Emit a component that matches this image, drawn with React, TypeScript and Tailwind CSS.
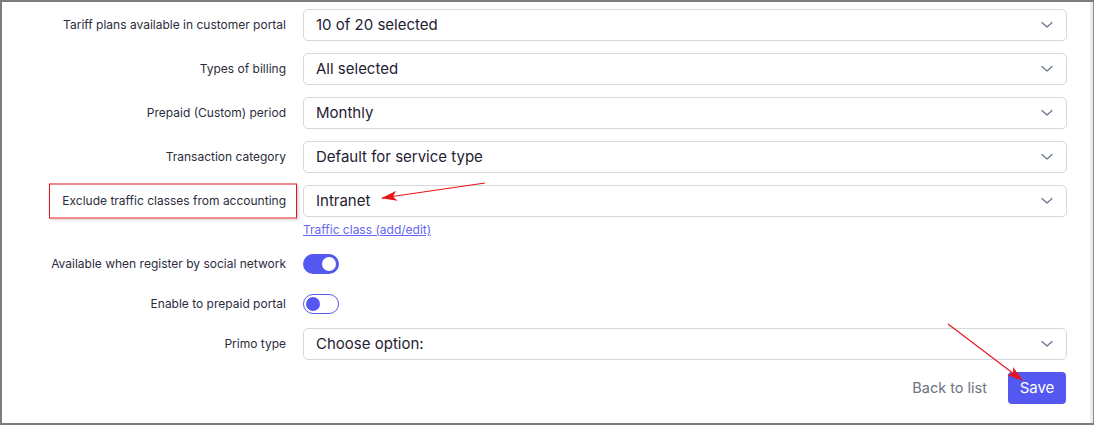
import React from "react";

function Chevron() {
  return (
    <svg width="12" height="8" viewBox="0 0 12 8" fill="none" className="shrink-0">
      <path d="M1 1.5 L6 6 L11 1.5" stroke="#6b7890" strokeWidth="1.3" strokeLinecap="round" strokeLinejoin="round" />
    </svg>
  );
}

function Select({ value }: { value: string }) {
  return (
    <div className="flex h-[32px] flex-1 items-center justify-between rounded-[5px] border border-[#d5d8de] bg-white pl-[12px] pr-[13px]">
      <span className="text-[15px] text-[#1f2233]">{value}</span>
      <Chevron />
    </div>
  );
}

function Label({ children }: { children: React.ReactNode }) {
  return <div className="w-[284px] shrink-0 text-right text-[12px] leading-[16px] text-[#2b2d3c]">{children}</div>;
}

export default function App() {
  return (
    <div
      className="relative h-[425px] w-[1094px] overflow-hidden border-b-2 border-l-2 border-t-2 border-[#7d7d7d] bg-white"
      style={{ fontFamily: "Inter, 'Noto Sans', sans-serif" }}
    >
      <div className="flex h-full">
        <div className="flex flex-1 flex-col pr-[23px] pt-[7px]">
          <div className="flex flex-col gap-[12px]">
            <div className="flex items-center gap-[17px]">
              <Label>Tariff plans available in customer portal</Label>
              <Select value="10 of 20 selected" />
            </div>
            <div className="flex items-center gap-[17px]">
              <Label>Types of billing</Label>
              <Select value="All selected" />
            </div>
            <div className="flex items-center gap-[17px]">
              <Label>Prepaid (Custom) period</Label>
              <Select value="Monthly" />
            </div>
            <div className="flex items-center gap-[17px]">
              <Label>Transaction category</Label>
              <Select value="Default for service type" />
            </div>
            <div className="flex items-center gap-[17px]">
              <div className="relative w-[284px] shrink-0">
                <div className="absolute left-[47px] top-1/2 h-[35px] w-[248px] -translate-y-1/2 border border-[#e0151b] shadow-[1px_1px_3px_rgba(0,0,0,0.25)]" />
                <div className="text-right text-[12px] leading-[16px] text-[#2b2d3c]">Exclude traffic classes from accounting</div>
              </div>
              <Select value="Intranet" />
            </div>
          </div>
          <div className="ml-[301px] mt-[3px] leading-[16px]">
            <span className="text-[12px] leading-[16px] text-[#6366f1] underline">Traffic class (add/edit)</span>
          </div>
          <div className="mt-[16px] flex items-center gap-[17px]">
            <Label>Available when register by social network</Label>
            <div className="flex h-[20px] w-[36px] items-center justify-end rounded-full bg-[#5558f0] pr-[3px]">
              <div className="h-[14px] w-[14px] rounded-full bg-white" />
            </div>
          </div>
          <div className="mt-[20px] flex items-center gap-[17px]">
            <Label>Enable to prepaid portal</Label>
            <div className="flex h-[20px] w-[36px] items-center rounded-full border border-[#5558f0] bg-white pl-[2px]">
              <div className="h-[14px] w-[14px] rounded-full bg-[#5558f0]" />
            </div>
          </div>
          <div className="mt-[14px] flex items-center gap-[17px]">
            <Label>Primo type</Label>
            <Select value="Choose option:" />
          </div>
          <div className="mt-[12px] flex items-center justify-end gap-[21px] pr-[1px]">
            <span className="text-[14.5px] text-[#6b7280]">Back to list</span>
            <div className="flex h-[32px] w-[58px] items-center justify-center rounded-[4px] bg-[#5558f0] text-[15px] text-white">
              Save
            </div>
          </div>
        </div>
        <div className="w-[3px] bg-[#ececec]" />
        <div className="w-[1px] bg-[#8a8a8a]" />
      </div>
      <svg className="pointer-events-none absolute left-0 top-0" width="1094" height="425">
        <defs>
          <marker id="ah" markerWidth="16" markerHeight="10" refX="15" refY="5" orient="auto" markerUnits="userSpaceOnUse">
            <path d="M0 0 L16 5 L0 10 L4 5 Z" fill="#e8141a" />
          </marker>
        </defs>
        <line x1="483" y1="181" x2="380" y2="196" stroke="#e8141a" strokeWidth="1.2" markerEnd="url(#ah)" />
        <line x1="946" y1="322" x2="1020" y2="378" stroke="#e8141a" strokeWidth="1.2" markerEnd="url(#ah)" />
      </svg>
    </div>
  );
}
